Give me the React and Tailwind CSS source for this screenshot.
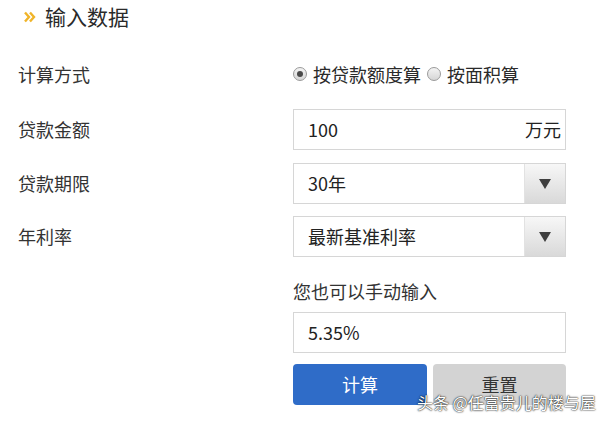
const font = { fontFamily: '"Noto Sans CJK SC", "Noto Sans", sans-serif' };

const Radio = ({ checked, label }) => (
  <label className="flex items-center gap-[6px]">
    <span className="flex h-[14px] w-[14px] items-center justify-center rounded-full border border-[#9a9a9a] bg-gradient-to-b from-[#f4f4f4] to-[#d6d6d6]">
      {checked && <span className="h-[6px] w-[6px] rounded-full bg-[#4a4a4a]" />}
    </span>
    <span>{label}</span>
  </label>
);

const Row = ({ label, children, className = "" }) => (
  <div className={"flex items-center " + className}>
    <div className="w-[293px] shrink-0 pl-[18px]">{label}</div>
    <div className="w-[273px] shrink-0">{children}</div>
  </div>
);

const Select = ({ value }) => (
  <div className="flex h-[41px] items-stretch border border-[#d6d6d6] bg-white">
    <div className="flex flex-1 items-center pl-[14px] text-[#222]">{value}</div>
    <div className="flex w-[41px] items-center justify-center border-l border-[#e2e2e2] bg-gradient-to-b from-[#f7f7f7] to-[#d9d9d9]">
      <svg width="12" height="10" viewBox="0 0 12 10">
        <path d="M0 0 L12 0 L6 10 Z" fill="#3f3f3f" />
      </svg>
    </div>
  </div>
);

export default function App() {
  return (
    <div className="relative h-[423px] w-[600px] overflow-hidden bg-white text-[18px] text-[#333]" style={font}>
      <div className="flex h-[33px] items-center pl-[24px]">
        <svg width="12" height="12" viewBox="0 0 12 12" className="mr-[9px]">
          <path d="M1 1.5 L5 6 L1 10.5" fill="none" stroke="#f0b429" strokeWidth="2.4" />
          <path d="M6 1.5 L10 6 L6 10.5" fill="none" stroke="#f0b429" strokeWidth="2.4" />
        </svg>
        <span className="text-[21px] text-[#2a2a2a]">输入数据</span>
      </div>

      <Row label="计算方式" className="mt-[27px] h-[28px]">
        <div className="flex items-center gap-[6px] whitespace-nowrap text-[#2a2a2a]">
          <Radio checked label="按贷款额度算" />
          <Radio label="按面积算" />
        </div>
      </Row>

      <Row label="贷款金额" className="mt-[21px]">
        <div className="flex h-[41px] items-center justify-between border border-[#d6d6d6] bg-white pl-[14px] pr-[4px] text-[#222]">
          <span>100</span>
          <span>万元</span>
        </div>
      </Row>

      <Row label="贷款期限" className="mt-[13px]">
        <Select value="30年" />
      </Row>

      <Row label="年利率" className="mt-[12px]">
        <Select value="最新基准利率" />
      </Row>

      <div className="ml-[293px] w-[273px]">
        <div className="mt-[22px] leading-[24px]">您也可以手动输入</div>
        <div className="mt-[9px] flex h-[41px] items-center border border-[#d6d6d6] bg-white pl-[14px] text-[#222]">
          5.35%
        </div>
        <div className="mt-[11px] flex gap-[6px]">
          <button className="h-[41px] w-[134px] rounded-[4px] bg-[#2f6cc8] text-white">计算</button>
          <button className="h-[41px] w-[133px] rounded-[4px] bg-[#d3d3d3] text-[#333]">重置</button>
        </div>
      </div>

      <div className="absolute left-[417px] top-[391px] whitespace-nowrap text-[16px] leading-[22px] text-white [text-shadow:0_0_2px_rgba(0,0,0,0.9),0_0_1px_rgba(0,0,0,0.9)]">
        头条 @任富贵儿的楼与屋
      </div>
    </div>
  );
}
